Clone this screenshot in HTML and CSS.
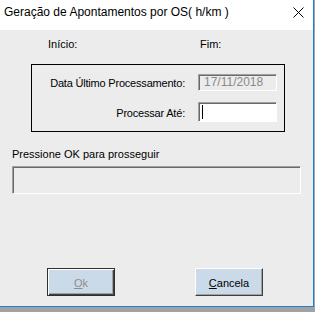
FILE: index.html
```html
<!DOCTYPE html>
<html lang="pt">
<head>
    <meta charset="UTF-8">
    <title>Geração de Apontamentos por OS</title>
    <link rel="stylesheet" href="styles.css">
</head>
<body>
    <div class="window">
        <!-- Barra de título -->
        <div class="titlebar">
            <span class="title">Geração de Apontamentos por OS( h/km )</span>
            <svg class="close" width="11" height="11" viewBox="0 0 11 11">
                <path d="M0.5 0.5 L10.5 10.5 M10.5 0.5 L0.5 10.5" stroke="#000" stroke-width="1" fill="none"/>
            </svg>
        </div>

        <div class="content">
            <div class="period">
                <span>Início:</span>
                <span>Fim:</span>
            </div>

            <div class="group">
                <label class="field-label">Data Último Processamento:</label>
                <div class="input input-disabled">17/11/2018</div>
                <label class="field-label">Processar Até:</label>
                <div class="input input-active"><span class="caret"></span></div>
            </div>

            <div class="status-label">Pressione OK para prosseguir</div>
            <div class="status-panel"></div>

            <div class="actions">
                <button class="btn btn-default" disabled><u>O</u>k</button>
                <button class="btn"><u>C</u>ancela</button>
            </div>
        </div>
    </div>
</body>
</html>
```

FILE: styles.css
```css
* {
    margin: 0;
    padding: 0;
    box-sizing: border-box;
}

body {
    background: #a2a2a2;
    font-family: 'Liberation Sans', Arial, sans-serif;
    color: #000;
}

.window {
    width: 314px;
    height: 307px;
    border-right: 1px solid #1a80d8;
    border-bottom: 1px solid #1a80d8;
    background: #ececec;
}

.titlebar {
    height: 30px;
    background: #fff;
    display: flex;
    justify-content: space-between;
    align-items: flex-start;
    padding: 4px 9px 0 4px;
}

.title {
    font-size: 12px;
    line-height: 16px;
}

.close {
    margin-top: 3px;
}

.content {
    padding-top: 8px;
    font-size: 11px;
    line-height: 13px;
}

.period {
    display: grid;
    grid-template-columns: 152px auto;
    padding-left: 48px;
}

.group {
    margin: 13px 0 0 31px;
    width: 254px;
    border: 1px solid #000;
    padding: 9px 0;
    display: grid;
    grid-template-columns: 153px 79px;
    column-gap: 13px;
    row-gap: 11px;
}

.field-label {
    text-align: right;
    align-self: center;
    padding-top: 2px;
    letter-spacing: -0.2px;
}

.input {
    border-style: solid;
    border-width: 1px;
    border-color: #a0a0a0 #fff #fff #a0a0a0;
    box-shadow: inset 1px 1px 0 #6a6a6a;
    display: flex;
    align-items: center;
}

.input-disabled {
    height: 17px;
    padding-left: 5px;
    font-size: 12px;
    color: #8a8a8a;
    background: #ececec;
}

.input-active {
    height: 20px;
    padding-left: 3px;
    background: #fff;
}

.caret {
    width: 1px;
    height: 14px;
    background: #000;
}

.status-label {
    margin: 16px 0 0 12px;
}

.status-panel {
    margin: 5px 0 0 12px;
    width: 289px;
    height: 28px;
    border-style: solid;
    border-width: 1px;
    border-color: #a0a0a0 #fff #fff #a0a0a0;
    box-shadow: inset 1px 1px 0 #6a6a6a;
}

.actions {
    margin-top: 74px;
    padding-left: 47px;
    display: flex;
    gap: 80px;
}

.btn {
    width: 68px;
    height: 28px;
    padding-top: 2px;
    font-family: 'Liberation Sans', Arial, sans-serif;
    font-size: 11px;
    color: #000;
    background: #cbdae9;
    border-style: solid;
    border-width: 1px;
    border-color: #fff #404040 #404040 #fff;
    box-shadow: inset -1px -1px 0 #a0a0a0;
}

.btn-default {
    border-color: #303030;
    box-shadow: inset 1px 1px 0 #fff, inset -1px -1px 0 #404040, inset -2px -2px 0 #a0a0a0;
}

.btn:disabled {
    color: #8d8d8d;
}
```
